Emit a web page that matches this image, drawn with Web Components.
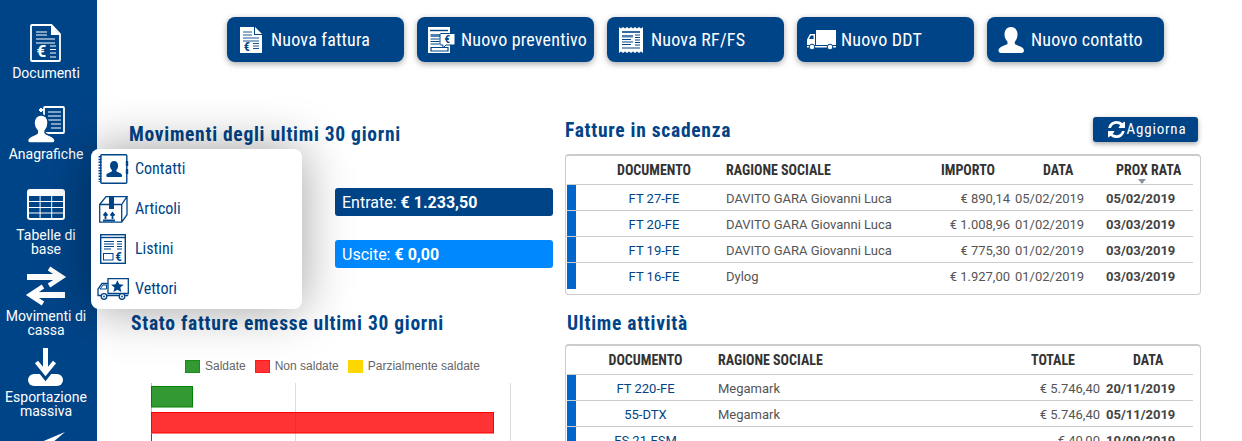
<!DOCTYPE html>
<html lang="it">
<head>
<meta charset="utf-8">
<title>Dashboard</title>
<style>
    html, body { margin:0; padding:0; height:100%; overflow:hidden; background:#fff; }
    body { font-family:Roboto,"Liberation Sans",sans-serif; }
</style>
</head>
<body>
<app-shell></app-shell>

<script>
    const NAVY = '#004488';
    const euro = (x,y,size,fill) => `<text x="${x}" y="${y}" font-size="${size}" font-weight="700" text-anchor="middle" font-family="Roboto,sans-serif" fill="${fill}">€</text>`;
    const person = 'M13 0c4 0 6.5 3 6.5 7.5 0 3-1 5.5-2.7 7.2v2c0 1.5 9.2 2.3 9.2 6.8 0 1.5-1 2.5-2.5 2.5H3c-1.5 0-2.5-1-2.5-2.5 0-4.5 9-5.3 9-6.8v-2C7.8 13 6.5 10.5 6.5 7.5 6.5 3 9 0 13 0z';

    const ICONS = {
        /* sidebar */
        documenti: [38,38,`<path d="M5 1h19.500l8.500 9V36a1 1 0 0 1-1 1H5a1 1 0 0 1-1-1V2a1 1 0 0 1 1-1z" fill="none" stroke="#fff" stroke-width="1.800"/>
            <path d="M24 1v10h9z" fill="#fff"/>
            <path d="M9 8h11M9 11h11M9 15h19M9 19h19M23 22h6M23 25.500h6M23 29h6M23 33h6" stroke="#fff" stroke-width="1.100"/>${euro(14.5,33,17,'#fff')}`],
        anagrafiche: [38,38,`<rect x="17" y="2" width="20" height="26" rx="1" fill="none" stroke="#fff" stroke-width="1.800"/>
            <path d="M21 7h13M21 11h13M21 15h13M24 19h10M24 23h10" stroke="#fff" stroke-width="1.100"/>
            <path d="M14 3v4M12 5h5" stroke="#fff" stroke-width="2"/>
            <g transform="translate(0,10) scale(1.08)"><path d="${person}" fill="#fff" stroke="${NAVY}" stroke-width="1.400"/></g>`],
        tabelle: [38,38,`<rect y="3" width="38" height="31" rx="3" fill="#fff"/>
            <path d="M2 10h10.600v5H2zM13.600 10h10.600v5H13.600zM25.200 10H36v5H25.200zM2 16h10.600v5H2zM13.600 16h10.600v5H13.600zM25.200 16H36v5H25.200zM2 22h10.600v4.500H2zM13.600 22h10.600v4.500H13.600zM25.200 22H36v4.500H25.200zM2 27.500h10.600V32H3a1 1 0 0 1-1-1zM13.600 27.500h10.600V32H13.600zM25.200 27.500H36V31a1 1 0 0 1-1 1h-9.800z" fill="${NAVY}"/>`],
        movimenti: [38,38,`<path d="M0 10h35M3 28h35" stroke="#fff" stroke-width="6" fill="none"/>
            <path d="M22 1.500 35 10 22 18.500M16 19.500 3 28 16 36.500" stroke="#fff" stroke-width="4.500" fill="none"/>`],
        esportazione: [38,38,`<rect x="1" y="26" width="35" height="12" rx="6" fill="#fff"/>
            <path d="M9 14 18.500 26 28 14" fill="none" stroke="${NAVY}" stroke-width="9"/>
            <path d="M18.500 0v24" stroke="#fff" stroke-width="5"/>
            <path d="M9.500 14 18.500 25 27.500 14" fill="none" stroke="#fff" stroke-width="4"/>`],
        invio: [38,38,`<path d="M38 3 0 19l12 6z" fill="#fff"/>`],
        /* toolbar */
        fattura: [22,26,`<path d="M0 0h14v8h8v18H0z" fill="#fff"/><path d="M15 0l7 7h-7z" fill="#fff"/>
            <path d="M3 5h9M3 8h9M3 11h16M3 14h16M13 16.500h6M13 19h6M13 21.500h6" stroke="${NAVY}" stroke-width=".9"/>${euro(7,23.500,12,NAVY)}`],
        preventivo: [27,26,`<rect x="0" y="0" width="22" height="26" fill="#fff"/>
            <path d="M2 3.500h18" stroke="${NAVY}" stroke-width="1.400"/>
            <path d="M2.500 7h11v3h-11z" fill="#4f7fb0"/><path d="M2.500 12h9M2.500 14.500h9M2.500 17h9" stroke="${NAVY}" stroke-width="1"/>
            <path d="M3 20.500h17v3.500H3z" fill="none" stroke="${NAVY}" stroke-width="1.200"/>
            <path d="M13 6.500h13a1 1 0 0 1 1 1V17a1 1 0 0 1-1 1h-8l-3 3v-3h-2a1 1 0 0 1-1-1V7.500a1 1 0 0 1 1-1z" fill="#fff" stroke="${NAVY}" stroke-width="1"/>${euro(19.500,16.200,11,NAVY)}`],
        ricevuta: [24,26,`<path d="M0 0l2 1.500L4 0l2 1.500L8 0l2 1.500L12 0l2 1.500L16 0l2 1.500L20 0l2 1.500L24 0v26l-2-1.500-2 1.500-2-1.500-2 1.500-2-1.500-2 1.500-2-1.500-2 1.500-2-1.500-2 1.500-2-1.500L0 26z" fill="#fff"/>
            <path d="M3 5h18" stroke="${NAVY}" stroke-width="1.600"/>
            <path d="M3 8h11v2.500H3z" fill="#4f7fb0"/><path d="M3 12.500h9M3 15h11M3 17.500h9M16 8h5M16 10.500h5M16 13h5M16 15.500h5M16 18h5M3 21h18" stroke="${NAVY}" stroke-width="1.100"/>`],
        camion: [29,20,`<path d="M9 0h20v15H9z" fill="#fff"/><path d="M0 9.500 3 4h5v11H0z" fill="#fff"/>
            <path d="M2 9 3.800 5.500H6.500V9z" fill="${NAVY}"/>
            <path d="M0 16h29v1.500H0z" fill="#fff"/>
            <circle cx="5" cy="17" r="2.800" fill="#fff" stroke="${NAVY}"/><circle cx="23" cy="17" r="2.800" fill="#fff" stroke="${NAVY}"/>`],
        contatto: [26,26,`<path d="${person}" fill="#fff"/>`],
        /* menu */
        contatti: [32,30,`<rect x="3.800" y=".7" width="26" height="28.600" rx="1" fill="#fff" stroke="${NAVY}" stroke-width="1.400"/>
            <path d="M3.500 2v26" stroke="${NAVY}" stroke-width="3" stroke-dasharray="1.500 1.300" transform="translate(-.5 0)"/>
            <path d="M30 7v5M30 15v5" stroke="${NAVY}" stroke-width="2.400"/>
            <g transform="translate(9,7) scale(.62)"><path d="${person}" fill="${NAVY}"/></g>`],
        articoli: [32,30,`<g transform="translate(2,2)" fill="none" stroke="${NAVY}" stroke-width="1.300">
            <path d="M.7 8.500h22v17.700H.7zM.7 8.500 7 .7h21l-5.300 7.800M28 .7v18l-5.300 7.500"/>
            </g><path d="M12 3h5v12h-5z" fill="${NAVY}"/>
            <path d="M8.500 25v-5M6.500 21.500l2-2.500 2 2.500M15.500 25v-5M13.500 21.500l2-2.500 2 2.500" stroke="${NAVY}" stroke-width="1.800" fill="none"/>
            <path d="M6 25.500h12v2H6z" fill="${NAVY}"/>`],
        listini: [32,30,`<rect x="3.700" y=".7" width="24.600" height="28.600" fill="#fff" stroke="${NAVY}" stroke-width="1.400"/>
            <path d="M4 3.500h24" stroke="${NAVY}" stroke-width="1.400"/>
            <path d="M7 7.500h10M7 10h10M7 12.500h10M7 15h7M20 7.500h5M20 10h5M20 12.500h5M20 15h5" stroke="${NAVY}" stroke-width="1.100"/>
            <rect x="6.500" y="19.500" width="9.500" height="6.500" fill="none" stroke="${NAVY}"/>${euro(21.500,27,13,NAVY)}`],
        vettori: [32,22,`<path d="M11 .7h20.300v14.800H11z" fill="#fff" stroke="${NAVY}" stroke-width="1.300"/>
            <path d="M11 5.500H5L1 11v6.500h30.300" fill="none" stroke="${NAVY}" stroke-width="1.300"/>
            <path d="M3 11l3-4h3.500v4z" fill="none" stroke="${NAVY}"/>
            <path d="M20.500 2.500l1.900 4.300 4.600.4-3.500 3 1.100 4.500-4.100-2.400-4.100 2.400 1.100-4.500-3.500-3 4.600-.4z" fill="${NAVY}" transform="translate(.5 -.3) scale(.97)"/>
            <circle cx="7" cy="18.500" r="2.800" fill="#fff" stroke="${NAVY}" stroke-width="1.300"/><circle cx="25" cy="18.500" r="2.800" fill="#fff" stroke="${NAVY}" stroke-width="1.300"/>
            <circle cx="7" cy="18.500" r=".9" fill="${NAVY}"/><circle cx="25" cy="18.500" r=".9" fill="${NAVY}"/>`],
        aggiorna: [17,17,`<svg viewBox="0 0 1536 1536" width="17" height="17"><path fill="#fff" d="M1511 928q0 5-1 7-64 268-268 434.5t-478 166.5q-146 0-282.5-55t-243.5-157l-129 129q-19 19-45 19t-45-19-19-45v-448q0-26 19-45t45-19h448q26 0 45 19t19 45-19 45l-137 137q71 66 161 102t187 36q134 0 250-65t186-179q11-17 53-117 8-23 30-23h192q13 0 22.500 9.500t9.500 22.500zm25-800v448q0 26-19 45t-45 19h-448q-26 0-45-19t-19-45 19-45l138-138q-148-137-349-137-134 0-250 65t-186 179q-11 17-53 117-8 23-30 23h-199q-13 0-22.500-9.500t-9.500-22.500v-7q65-268 270-434.500t480-166.500q146 0 284 55.500t245 156.500l130-129q19-19 45-19t45 19 19 45z"/></svg>`]
    };

    class AppIcon extends HTMLElement{
        constructor(){
            super();
            this.attachShadow({mode:'open'});
        }
        connectedCallback(){
            const [w,h,body] = ICONS[this.getAttribute('name')];
            this.shadowRoot.innerHTML = `<style>:host{display:block;width:${w}px;height:${h}px;line-height:0;}svg{overflow:visible;}</style>
            <svg viewBox="0 0 ${w} ${h}" width="${w}" height="${h}">${body}</svg>`;
        }
    }
    customElements.define('app-icon',AppIcon);

    /* LEFT BAR */
    class SideItem extends HTMLElement{
        constructor(){
            super();
            this.attachShadow({mode:'open'});
            this.shadowRoot.innerHTML = `<style>
                :host{display:flex;flex-direction:column;align-items:center;height:81px;width:92px;
                    color:#fff;font:400 14px/14px Roboto,sans-serif;text-align:center;}
                .label{margin-top:4px;}
            </style>
            <app-icon name="${this.getAttribute('icon')}"></app-icon>
            <div class="label"><slot></slot></div>`;
        }
    }
    customElements.define('side-item',SideItem);

    class SideBar extends HTMLElement{
        constructor(){
            super();
            this.attachShadow({mode:'open'});
            this.shadowRoot.innerHTML = `<style>
                :host{display:block;width:97px;height:441px;overflow:hidden;background:${NAVY};padding-top:24px;box-sizing:border-box;flex:none;}
            </style><slot></slot>`;
        }
    }
    customElements.define('side-bar',SideBar);

    /* TOP BUTTONS */
    class ActionButton extends HTMLElement{
        constructor(){
            super();
            this.attachShadow({mode:'open'});
            this.shadowRoot.innerHTML = `<style>
                :host{display:flex;align-items:center;box-sizing:border-box;width:177px;height:45px;padding-left:8px;
                    background:${NAVY};border-radius:8px;box-shadow:0 2px 6px rgba(0,0,0,.35);color:#fff;
                    font:400 18px/1 "Roboto Condensed",Roboto,sans-serif;font-stretch:75%;letter-spacing:.2px;white-space:nowrap;}
                .ic{width:32px;margin-right:4px;display:flex;justify-content:center;}
            </style>
            <span class="ic"><app-icon name="${this.getAttribute('icon')}"></app-icon></span><slot></slot>`;
        }
    }
    customElements.define('action-button',ActionButton);

    /* HEADINGS AND PILLS */
    class SectionTitle extends HTMLElement{
        constructor(){
            super();
            this.attachShadow({mode:'open'});
            this.shadowRoot.innerHTML = `<style>
                :host{display:block;color:${NAVY};font:700 19.500px/24px "Roboto Condensed",Roboto,sans-serif;font-stretch:75%;letter-spacing:.72px;white-space:nowrap;}
            </style><slot></slot>`;
        }
    }
    customElements.define('section-title',SectionTitle);

    class MoneyPill extends HTMLElement{
        constructor(){
            super();
            this.attachShadow({mode:'open'});
            this.shadowRoot.innerHTML = `<style>
                :host{display:flex;align-items:center;box-sizing:border-box;width:218px;height:28px;padding:1px 0 0 7px;border-radius:3px;
                    background:var(--pill,${NAVY});color:#fff;font:400 16px/1 Roboto,sans-serif;white-space:pre;}
                b{font-weight:700;}
            </style><span>${this.getAttribute('label')}: <b>${this.getAttribute('value')}</b></span>`;
        }
    }
    customElements.define('money-pill',MoneyPill);

    /* CHART */
    class StatusChart extends HTMLElement{
        constructor(){
            super();
            this.attachShadow({mode:'open'});
            this.shadowRoot.innerHTML = `<style>
                :host{display:block;width:422px;margin-left:2px;}
                .legend{display:flex;align-items:center;height:14px;margin-left:54px;color:#666;font:12px/14px "Liberation Sans",Arial,sans-serif;}
                .legend i{width:13px;height:11px;margin-right:5px;border:1px solid;}
                .legend span{margin-right:9px;}
                svg{display:block;margin-top:10px;}
            </style>
            <div class="legend">
                <i style="background:rgba(0,128,0,.8);border-color:rgba(0,128,0,.5)"></i><span>Saldate</span>
                <i style="background:rgba(255,0,0,.8);border-color:rgba(255,0,0,.5)"></i><span>Non saldate</span>
                <i style="background:#ffd700;border-color:rgba(255,215,0,.5)"></i><span>Parzialmente saldate</span>
            </div>
            <svg width="422" height="60" viewBox="0 0 422 60">
                <path d="M164.500 0v60M379.500 0v60" stroke="#ddd"/>
                <path d="M20.500 0v60" stroke="#bbb"/>
                <rect x="20.500" y="3.500" width="41" height="20.500" fill="rgba(0,128,0,.8)" stroke="green"/>
                <rect x="20.500" y="29.500" width="342" height="20.500" fill="rgba(255,0,0,.8)" stroke="red"/>
                <path d="M20.500 51v7" stroke="green"/>
            </svg>`;
        }
    }
    customElements.define('status-chart',StatusChart);

    /* TABLES */
    class TableRow extends HTMLElement{
        constructor(){
            super();
            this.attachShadow({mode:'open'});
        }
        connectedCallback(){
            const cells = this.getAttribute('cells').split('|');
            const last = this.hasAttribute('last');
            this.shadowRoot.innerHTML = `<style>
                :host{display:grid;grid-template-columns:var(--row-cols);align-items:center;box-sizing:border-box;height:26px;padding-top:1px;
                    border-bottom:1px solid ${last?'transparent':'#ccc'};
                    color:#555;font:400 13px/1 Roboto,sans-serif;white-space:nowrap;}
                .mark{align-self:stretch;background:#0066cc;margin:-1px 0 ${last?'-1px':'0'};}
                .doc{color:${NAVY};text-align:center;padding:0 var(--doc-right,0) 0 var(--doc-pad,0);}
                .num{text-align:right;}
                .date{padding-left:var(--date-pad,0);}
                .bold{font-weight:700;color:#444;padding-left:var(--bold-pad,0);}
            </style>
            <span class="mark"></span>
            ${cells.map((c,i)=>`<span class="${this.classFor(i,cells.length)}">${c}</span>`).join('')}`;
        }
        classFor(i,n){
            if(i===0) return 'doc';
            if(i===n-1) return 'bold';
            if(i===2) return 'num';
            if(i===3) return 'date';
            return '';
        }
    }
    customElements.define('table-row',TableRow);

    class TableHead extends HTMLElement{
        constructor(){
            super();
            this.attachShadow({mode:'open'});
        }
        connectedCallback(){
            const cells = this.getAttribute('cells').split('|');
            this.shadowRoot.innerHTML = `<style>
                :host{display:grid;grid-template-columns:var(--head-cols);align-items:center;box-sizing:border-box;height:29px;position:relative;
                    border-bottom:1px solid #ccc;color:#333;
                    font:700 14px/1 "Roboto Condensed",Roboto,sans-serif;font-stretch:75%;white-space:nowrap;}
                .first{text-align:center;padding:0 var(--doc-right,0) 0 var(--doc-pad,0);}
                .sort{position:absolute;right:var(--sort-right,0);bottom:0;width:0;height:0;border:4.500px solid transparent;border-top:5px solid #8a94a0;border-bottom:0;}
            </style>
            <span></span>
            ${cells.map((c,i)=>`<span class="${i===0?'first':''}">${c}</span>`).join('')}
            ${this.hasAttribute('sorted')?'<i class="sort"></i>':''}`;
        }
    }
    customElements.define('table-head',TableHead);

    class DataTable extends HTMLElement{
        constructor(){
            super();
            this.attachShadow({mode:'open'});
            this.shadowRoot.innerHTML = `<style>
                :host{display:block;box-sizing:border-box;width:636px;padding:0 7px 5px 1px;border:1px solid #ccc;border-top-width:2px;border-radius:4px;background:#fff;}
            </style><slot></slot>`;
        }
    }
    customElements.define('data-table',DataTable);

    /* DROPDOWN */
    class PopMenu extends HTMLElement{
        constructor(){
            super();
            this.attachShadow({mode:'open'});
            this.shadowRoot.innerHTML = `<style>
                :host{position:absolute;left:91px;top:149px;width:211px;height:160px;background:#fff;border-radius:8px;
                    box-shadow:0 0 50px rgba(0,0,0,.38);padding-left:6px;box-sizing:border-box;}
            </style><slot></slot>`;
        }
    }
    customElements.define('pop-menu',PopMenu);

    class MenuItem extends HTMLElement{
        constructor(){
            super();
            this.attachShadow({mode:'open'});
            this.shadowRoot.innerHTML = `<style>
                :host{display:flex;align-items:center;height:40px;color:${NAVY};font:400 16px/1 "Roboto Condensed",Roboto,sans-serif;font-stretch:75%;}
                .ic{width:32px;margin-right:6px;display:flex;justify-content:center;}
            </style>
            <span class="ic"><app-icon name="${this.getAttribute('icon')}"></app-icon></span><slot></slot>`;
        }
    }
    customElements.define('menu-item',MenuItem);

    class RefreshButton extends HTMLElement{
        constructor(){
            super();
            this.attachShadow({mode:'open'});
            this.shadowRoot.innerHTML = `<style>
                :host{display:flex;align-items:center;justify-content:center;gap:2px;box-sizing:border-box;width:105px;height:25px;padding-left:3px;border-radius:3px;
                    background:${NAVY};box-shadow:0 2px 5px rgba(0,0,0,.35);color:#fff;
                    font:400 15px/1 "Roboto Condensed",Roboto,sans-serif;font-stretch:75%;letter-spacing:.8px;}
            </style><app-icon name="aggiorna"></app-icon><slot></slot>`;
        }
    }
    customElements.define('refresh-button',RefreshButton);

    /* PAGE */
    class AppShell extends HTMLElement{
        constructor(){
            super();
            this.attachShadow({mode:'open'});
            this.shadowRoot.innerHTML = `<style>
                :host{display:flex;position:relative;width:1242px;height:441px;overflow:hidden;}
                .main{flex:1;min-width:0;}
                .actions{display:flex;gap:13px;padding:17px 0 0 130px;}
                .cols{display:grid;grid-template-columns:424px 636px;column-gap:12px;padding:61px 0 0 32px;}
                .left{display:flex;flex-direction:column;}
                .pills{display:flex;flex-direction:column;align-items:flex-end;gap:24px;margin-top:41px;}
                .uscite{--pill:#0088ff;}
                .stato{margin:44px 0 0 2px;}
                status-chart{margin-top:23px;}
                .right{display:flex;flex-direction:column;}
                .head{display:flex;justify-content:space-between;align-items:flex-end;height:36px;padding-right:3px;margin-top:-17px;}
                .head section-title{margin-bottom:-1px;}
                .t1{--row-cols:9px 150px 204px 80px 80px 1fr;--head-cols:9px 150px 215px 102px 73px 1fr;--doc-pad:6px;--date-pad:5px;--bold-pad:16px;--sort-right:47px;}
                .ultime{margin:17px 0 8px 2px;}
                .t2{--row-cols:9px 142px 300px 82px 1fr;--head-cols:9px 142px 313px 102px 1fr;--bold-pad:6px;--doc-right:3px;}
            </style>
            <side-bar>
                <side-item icon="documenti">Documenti</side-item>
                <side-item icon="anagrafiche">Anagrafiche</side-item>
                <side-item icon="tabelle">Tabelle di<br>base</side-item>
                <side-item icon="movimenti">Movimenti di<br>cassa</side-item>
                <side-item icon="esportazione">Esportazione<br>massiva</side-item>
                <side-item icon="invio"></side-item>
            </side-bar>
            <div class="main">
                <div class="actions">
                    <action-button icon="fattura">Nuova fattura</action-button>
                    <action-button icon="preventivo">Nuovo preventivo</action-button>
                    <action-button icon="ricevuta">Nuova RF/FS</action-button>
                    <action-button icon="camion">Nuovo DDT</action-button>
                    <action-button icon="contatto">Nuovo contatto</action-button>
                </div>
                <div class="cols">
                    <div class="left">
                        <section-title>Movimenti degli ultimi 30 giorni</section-title>
                        <div class="pills">
                            <money-pill label="Entrate" value="€ 1.233,50"></money-pill>
                            <money-pill class="uscite" label="Uscite" value="€ 0,00"></money-pill>
                        </div>
                        <section-title class="stato">Stato fatture emesse ultimi 30 giorni</section-title>
                        <status-chart></status-chart>
                    </div>
                    <div class="right">
                        <div class="head">
                            <section-title>Fatture in scadenza</section-title>
                            <refresh-button>Aggiorna</refresh-button>
                        </div>
                        <data-table class="t1" style="margin-top:12px">
                            <table-head sorted cells="DOCUMENTO|RAGIONE SOCIALE|IMPORTO|DATA|PROX RATA"></table-head>
                            <table-row cells="FT 27-FE|DAVITO GARA Giovanni Luca|€ 890,14|05/02/2019|05/02/2019"></table-row>
                            <table-row cells="FT 20-FE|DAVITO GARA Giovanni Luca|€ 1.008,96|01/02/2019|03/03/2019"></table-row>
                            <table-row cells="FT 19-FE|DAVITO GARA Giovanni Luca|€ 775,30|01/02/2019|03/03/2019"></table-row>
                            <table-row last cells="FT 16-FE|Dylog|€ 1.927,00|01/02/2019|03/03/2019"></table-row>
                        </data-table>
                        <section-title class="ultime">Ultime attività</section-title>
                        <data-table class="t2">
                            <table-head cells="DOCUMENTO|RAGIONE SOCIALE|TOTALE|DATA"></table-head>
                            <table-row cells="FT 220-FE|Megamark|€ 5.746,40|20/11/2019"></table-row>
                            <table-row cells="55-DTX|Megamark|€ 5.746,40|05/11/2019"></table-row>
                            <table-row last cells="FS 21-FSM||€ 40,00|10/09/2019"></table-row>
                        </data-table>
                    </div>
                </div>
            </div>
            <pop-menu>
                <menu-item icon="contatti">Contatti</menu-item>
                <menu-item icon="articoli">Articoli</menu-item>
                <menu-item icon="listini">Listini</menu-item>
                <menu-item icon="vettori">Vettori</menu-item>
            </pop-menu>`;
        }
    }
    customElements.define('app-shell',AppShell);
</script>
</body>
</html>
